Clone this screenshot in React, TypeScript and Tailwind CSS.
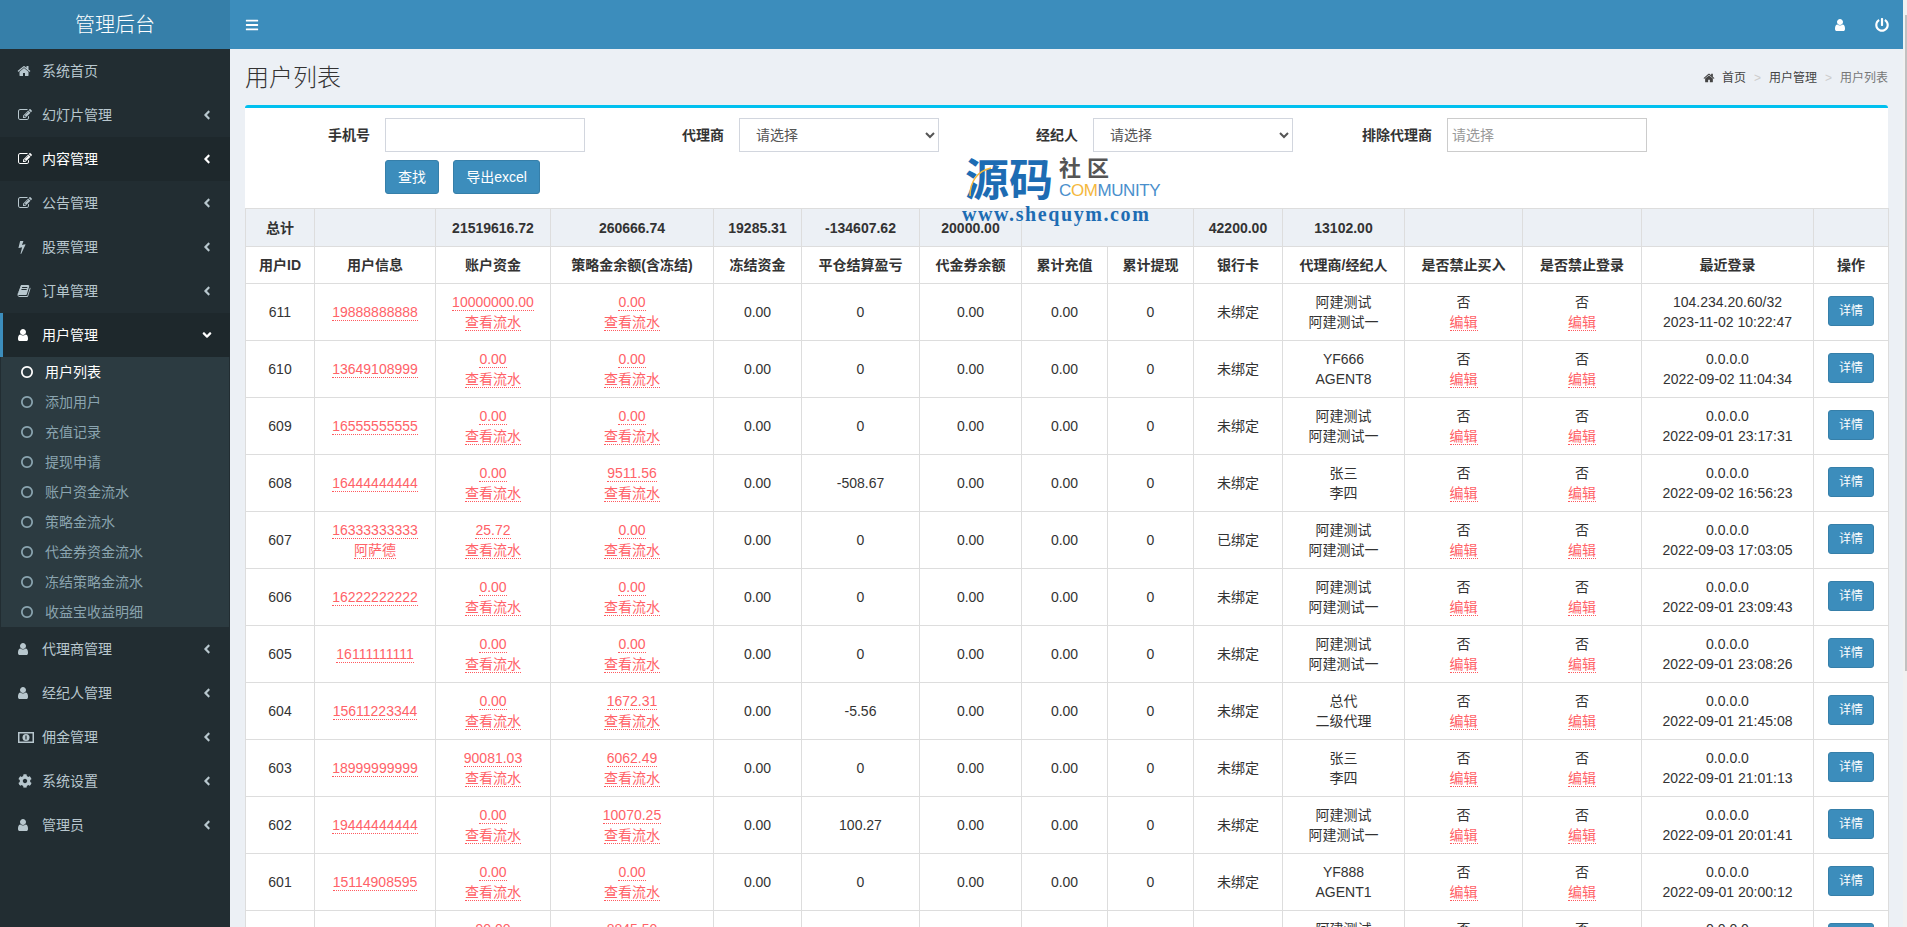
import type { ReactNode } from 'react';
import { FaAngleDown, FaAngleLeft, FaBars, FaCog, FaPowerOff } from 'react-icons/fa';

// font-awesome 4 glyphs, the fa package only ships the newer shapes
const glyphs = {
    home: 'M1472 992v480q0 26-19 45t-45 19h-384v-384h-256v384h-384q-26 0-45-19t-19-45v-480q0-1 .5-3t.5-3l575-474 575 474q1 2 1 6zm223-69l-62 74q-8 9-21 11h-3q-13 0-21-7l-692-577-692 577q-12 8-24 7-13-2-21-11l-62-74q-8-10-7-23.500t11-21.500l719-599q32-26 76-26t76 26l244 204v-195q0-14 9-23t23-9h192q14 0 23 9t9 23v408l219 182q10 8 11 21.500t-7 23.500z',
    edit: 'M888 1184l116-116-152-152-116 116v56h96v96h56zm440-720q-16-16-33 1l-350 350q-17 17-1 33t33-1l350-350q17-17 1-33zm80 594v190q0 119-84.500 203.500t-203.500 84.500h-832q-119 0-203.500-84.500t-84.500-203.500v-832q0-119 84.500-203.500t203.500-84.500h832q63 0 117 25 15 7 18 23 3 17-9 29l-49 49q-14 14-32 8-23-6-45-6h-832q-66 0-113 47t-47 113v832q0 66 47 113t113 47h832q66 0 113-47t47-113v-126q0-13 9-22l64-64q15-15 35-7t20 29zm-96-738l288 288-672 672h-288v-288zm444 132l-92 92-288-288 92-92q28-28 68-28t68 28l152 152q28 28 28 68t-28 68z',
    book: 'M1703 478q40 57 18 129l-275 906q-19 64-76.500 107.500t-122.500 43.500h-923q-77 0-148.500-53.500t-99.500-131.500q-24-67-2-127 0-4 3-27t4-37q1-8-3-21.500t-3-19.500q2-11 8-21t16.500-23.500 16.500-23.500q23-38 45-91.500t30-91.500q3-10 .5-30t-.5-28q3-11 17-28t17-23q21-36 42-92t25-90q1-9-2.500-32t.5-28q4-13 22-30.500t22-22.500q19-26 42.500-84.500t27.500-96.500q1-8-3-25.500t-2-26.500q2-8 9-18t18-23 17-21q8-12 16.500-30.500t15-35 16-36 19.500-32 26.500-23.500 36-11.500 47.500 5.500l-1 3q38-9 51-9h761q74 0 114 56t18 130l-274 906q-36 119-71.500 153.500t-128.500 34.500h-869q-27 0-38 15-11 16-1 43 24 70 144 70h923q29 0 56-15.500t35-41.500l300-987q7-22 5-57 38 15 59 43zm-1064 2q-4 13 2 22.500t20 9.500h608q13 0 25.500-9.500t16.500-22.500l21-64q4-13-2-22.500t-20-9.500h-608q-13 0-25.500 9.500t-16.500 22.500zm-83 256q-4 13 2 22.500t20 9.500h608q13 0 25.500-9.500t16.500-22.500l21-64q4-13-2-22.500t-20-9.500h-608q-13 0-25.500 9.500t-16.500 22.500z',
    user: 'M1536 1399q0 109-62.500 187t-150.500 78h-854q-88 0-150.500-78t-62.500-187q0-85 8.500-160.500t31.500-151.500 58.500-130 94-88.500 134.500-34.500q131 128 313 128t313-128q76 0 134.500 34.500t94 88.500 58.500 130 31.500 151.500 8.500 160.500zm-256-887q0 159-112.500 271.500t-271.500 112.500-271.500-112.500-112.500-271.500 112.500-271.500 271.500-112.500 271.500 112.500 112.500 271.500z',
    bolt: 'M1333 566q18 20 7 44l-540 1157q-13 25-42 25-4 0-14-2-17-5-25.500-19t-4.500-30l197-808-406 101q-4 1-12 1-18 0-31-11-18-15-13-39l201-825q4-14 16-23t28-9h328q19 0 32 12.500t13 29.500q0 8-5 18l-171 463 396-98q8-2 12-2 19 0 34 15z',
    circle: 'M896 352q-148 0-273 73t-198 198-73 273 73 273 198 198 273 73 273-73 198-198 73-273-73-273-198-198-273-73zm768 544q0 209-103 385.500t-279.500 279.500-385.500 103-385.500-103-279.500-279.500-103-385.500 103-385.500 279.500-279.500 385.500-103 385.500 103 279.500 279.500 103 385.500z',
};

const Fa4 = ({ name, className = '' }: { name: keyof typeof glyphs; className?: string }) => (
    <svg viewBox="0 0 1792 1792" fill="currentColor" className={`h-[14px] w-[14px] ${className}`}>
        <path d={glyphs[name]} />
    </svg>
);

const MoneyIcon = () => (
    <svg viewBox="0 0 16 11" className="h-[11px] w-[16px]">
        <rect width="16" height="11" fill="currentColor" />
        <rect x="1.5" y="1.5" width="13" height="8" fill="#222d32" />
        <circle cx="8" cy="5.5" r="3.5" fill="currentColor" />
        <rect x="7.4" y="3.5" width="1.2" height="4" fill="#222d32" />
    </svg>
);

const menu = [
    { label: '系统首页', icon: <Fa4 name="home" className="-ml-px" />, arrow: false },
    { label: '幻灯片管理', icon: <Fa4 name="edit" />, arrow: true },
    { label: '内容管理', icon: <Fa4 name="edit" />, arrow: true, hover: true },
    { label: '公告管理', icon: <Fa4 name="edit" />, arrow: true },
    { label: '股票管理', icon: <Fa4 name="bolt" className="-ml-[3px]" />, arrow: true },
    { label: '订单管理', icon: <Fa4 name="book" className="-ml-px" />, arrow: true },
    { label: '用户管理', icon: <Fa4 name="user" className="-ml-[2px]" />, arrow: true, open: true },
    { label: '代理商管理', icon: <Fa4 name="user" className="-ml-[2px]" />, arrow: true },
    { label: '经纪人管理', icon: <Fa4 name="user" className="-ml-[2px]" />, arrow: true },
    { label: '佣金管理', icon: <MoneyIcon />, arrow: true },
    { label: '系统设置', icon: <FaCog />, arrow: true },
    { label: '管理员', icon: <Fa4 name="user" className="-ml-[2px]" />, arrow: true },
];

const subMenu = ['用户列表', '添加用户', '充值记录', '提现申请', '账户资金流水', '策略金流水', '代金券资金流水', '冻结策略金流水', '收益宝收益明细'];

const colWidths = [69, 121, 115, 163, 88, 118, 102, 86, 86, 89, 122, 118, 119, 172, 75];

const headers = ['用户ID', '用户信息', '账户资金', '策略金余额(含冻结)', '冻结资金', '平仓结算盈亏', '代金券余额', '累计充值', '累计提现', '银行卡', '代理商/经纪人', '是否禁止买入', '是否禁止登录', '最近登录', '操作'];

const ajian = ['阿建测试', '阿建测试一'];

interface Row {
    id: number;
    phone: string;
    name?: string;
    money: string;
    strategy: string;
    profit: string;
    bank: string;
    agent: string[];
    ip: string;
    time: string;
}

const rows: Row[] = [
    { id: 611, phone: '19888888888', money: '10000000.00', strategy: '0.00', profit: '0', bank: '未绑定', agent: ajian, ip: '104.234.20.60/32', time: '2023-11-02 10:22:47' },
    { id: 610, phone: '13649108999', money: '0.00', strategy: '0.00', profit: '0', bank: '未绑定', agent: ['YF666', 'AGENT8'], ip: '0.0.0.0', time: '2022-09-02 11:04:34' },
    { id: 609, phone: '16555555555', money: '0.00', strategy: '0.00', profit: '0', bank: '未绑定', agent: ajian, ip: '0.0.0.0', time: '2022-09-01 23:17:31' },
    { id: 608, phone: '16444444444', money: '0.00', strategy: '9511.56', profit: '-508.67', bank: '未绑定', agent: ['张三', '李四'], ip: '0.0.0.0', time: '2022-09-02 16:56:23' },
    { id: 607, phone: '16333333333', name: '阿萨德', money: '25.72', strategy: '0.00', profit: '0', bank: '已绑定', agent: ajian, ip: '0.0.0.0', time: '2022-09-03 17:03:05' },
    { id: 606, phone: '16222222222', money: '0.00', strategy: '0.00', profit: '0', bank: '未绑定', agent: ajian, ip: '0.0.0.0', time: '2022-09-01 23:09:43' },
    { id: 605, phone: '16111111111', money: '0.00', strategy: '0.00', profit: '0', bank: '未绑定', agent: ajian, ip: '0.0.0.0', time: '2022-09-01 23:08:26' },
    { id: 604, phone: '15611223344', money: '0.00', strategy: '1672.31', profit: '-5.56', bank: '未绑定', agent: ['总代', '二级代理'], ip: '0.0.0.0', time: '2022-09-01 21:45:08' },
    { id: 603, phone: '18999999999', money: '90081.03', strategy: '6062.49', profit: '0', bank: '未绑定', agent: ['张三', '李四'], ip: '0.0.0.0', time: '2022-09-01 21:01:13' },
    { id: 602, phone: '19444444444', money: '0.00', strategy: '10070.25', profit: '100.27', bank: '未绑定', agent: ajian, ip: '0.0.0.0', time: '2022-09-01 20:01:41' },
    { id: 601, phone: '15114908595', money: '0.00', strategy: '0.00', profit: '0', bank: '未绑定', agent: ['YF888', 'AGENT1'], ip: '0.0.0.0', time: '2022-09-01 20:00:12' },
    { id: 600, phone: '15000000000', money: '90.00', strategy: '8845.50', profit: '0', bank: '未绑定', agent: ajian, ip: '0.0.0.0', time: '2022-09-01 19:30:00' },
];

const Editable = ({ children }: { children: ReactNode }) => (
    <span className="border-b border-dotted border-[#ff5a5f] text-[#ff6268]">{children}</span>
);

const Stack = ({ top, bottom }: { top: ReactNode; bottom: ReactNode }) => (
    <>
        <div>{top}</div>
        <div>{bottom}</div>
    </>
);

const Cell = ({ children }: { children?: ReactNode }) => (
    <td className="border border-[#ddd] p-0 text-center align-middle">{children}</td>
);

const Total = ({ children, span }: { children?: ReactNode; span?: number }) => (
    <th colSpan={span} className="border border-[#ddd] p-0 text-center align-middle font-bold">{children}</th>
);

const Sidebar = () => (
    <aside className="flex w-[230px] shrink-0 flex-col bg-[#222d32]">
        <div className="flex h-[49px] shrink-0 items-center justify-center bg-[#367fa9] text-[20px] font-light text-white">管理后台</div>
        <ul className="text-[14px] text-[#b8c7ce]">
            {menu.map((item) => (
                <li key={item.label}>
                    <div
                        className={`flex h-[44px] items-center border-l-[3px] pl-[15px] pr-[16px] ${
                            item.open
                                ? 'border-[#3c8dbc] bg-[#1e282c] text-white'
                                : item.hover
                                  ? 'border-transparent bg-[#1e282c] text-white'
                                  : 'border-transparent'
                        }`}
                    >
                        <span className="w-[24px] shrink-0 text-[14px]">{item.icon}</span>
                        <span className="flex-1">{item.label}</span>
                        {item.arrow && (item.open ? <FaAngleDown className="text-[14px]" /> : <FaAngleLeft className="text-[14px]" />)}
                    </div>
                    {item.open && (
                        <ul className="mx-px bg-[#2c3b41] text-[#8aa4af]">
                            {subMenu.map((sub, i) => (
                                <li key={sub} className={`flex h-[30px] items-center pl-[19px] ${i === 0 ? 'text-white' : ''}`}>
                                    <span className="w-[25px] shrink-0">
                                        <Fa4 name="circle" />
                                    </span>
                                    {sub}
                                </li>
                            ))}
                        </ul>
                    )}
                </li>
            ))}
        </ul>
    </aside>
);

const Watermark = () => (
    <div className="pointer-events-none absolute left-[720px] top-[48px] z-10 w-[210px]">
        <div className="flex">
            <div className="relative text-[44px] font-bold leading-[50px] text-[#1d6cb3]">
                源码
                <svg className="absolute left-[4px] top-[10px]" width="24" height="32" viewBox="0 0 24 32" fill="none">
                    <path d="M1 30C1 16 8 5 22 2" stroke="#f5b83d" strokeWidth="1.5" />
                </svg>
            </div>
            <div className="ml-[6px]">
                <div className="text-[22px] font-bold leading-[26px] tracking-[6px] text-[#555]">社区</div>
                <div className="text-[17px] leading-[18px] tracking-[-0.4px] text-[#4a8fcc]">
                    C<span className="text-[#f5b83d]">OM</span>MUNITY
                </div>
            </div>
        </div>
        <div className="-mt-[2px] -ml-[3px] font-['Liberation_Serif',serif] text-[20px] font-bold leading-[20px] tracking-[1.6px] text-[#1d6cb3]">www.shequym.com</div>
    </div>
);

const SearchForm = () => (
    <div className="h-[100px] pt-[10px]">
        <div className="grid grid-cols-[340px_354px_354px_354px]">
            <div className="flex items-center">
                <label className="flex-1 pr-[15px] text-right font-bold">手机号</label>
                <input className="h-[34px] w-[200px] border border-[#d2d6de] px-3" />
            </div>
            <div className="flex items-center">
                <label className="flex-1 pr-[15px] text-right font-bold">代理商</label>
                <select className="h-[34px] w-[200px] border border-[#d2d6de] bg-white px-3 text-[#555]">
                    <option>请选择</option>
                </select>
            </div>
            <div className="flex items-center">
                <label className="flex-1 pr-[15px] text-right font-bold">经纪人</label>
                <select className="h-[34px] w-[200px] border border-[#d2d6de] bg-white px-3 text-[#555]">
                    <option>请选择</option>
                </select>
            </div>
            <div className="flex items-center">
                <label className="flex-1 pr-[15px] text-right font-bold">排除代理商</label>
                <input className="h-[34px] w-[200px] border border-[#ccc] px-1 placeholder:text-[#999]" placeholder="请选择" />
            </div>
        </div>
        <div className="ml-[140px] mt-[8px] flex gap-[14px]">
            <button className="h-[34px] w-[54px] rounded-[3px] border border-[#367fa9] bg-[#3c8dbc] text-white">查找</button>
            <button className="h-[34px] w-[87px] rounded-[3px] border border-[#367fa9] bg-[#3c8dbc] text-white">导出excel</button>
        </div>
    </div>
);

const UserTable = () => (
    <table className="w-full table-fixed border-collapse">
        <colgroup>
            {colWidths.map((w, i) => (
                <col key={i} style={{ width: w }} />
            ))}
        </colgroup>
        <thead>
            <tr className="h-[38px] bg-[#ecf0f5]">
                <Total>总计</Total>
                <Total />
                <Total>21519616.72</Total>
                <Total>260666.74</Total>
                <Total>19285.31</Total>
                <Total>-134607.62</Total>
                <Total>20000.00</Total>
                <Total span={2} />
                <Total>42200.00</Total>
                <Total>13102.00</Total>
                <Total />
                <Total />
                <Total />
                <Total />
            </tr>
            <tr className="h-[37px]">
                {headers.map((h) => (
                    <Total key={h}>{h}</Total>
                ))}
            </tr>
        </thead>
        <tbody>
            {rows.map((row) => (
                <tr key={row.id} className="h-[57px]">
                    <Cell>{row.id}</Cell>
                    <Cell>
                        <Editable>{row.phone}</Editable>
                        {row.name && (
                            <div>
                                <Editable>{row.name}</Editable>
                            </div>
                        )}
                    </Cell>
                    <Cell>
                        <Stack top={<Editable>{row.money}</Editable>} bottom={<Editable>查看流水</Editable>} />
                    </Cell>
                    <Cell>
                        <Stack top={<Editable>{row.strategy}</Editable>} bottom={<Editable>查看流水</Editable>} />
                    </Cell>
                    <Cell>0.00</Cell>
                    <Cell>{row.profit}</Cell>
                    <Cell>0.00</Cell>
                    <Cell>0.00</Cell>
                    <Cell>0</Cell>
                    <Cell>{row.bank}</Cell>
                    <Cell>
                        <Stack top={row.agent[0]} bottom={row.agent[1]} />
                    </Cell>
                    <Cell>
                        <Stack top="否" bottom={<Editable>编辑</Editable>} />
                    </Cell>
                    <Cell>
                        <Stack top="否" bottom={<Editable>编辑</Editable>} />
                    </Cell>
                    <Cell>
                        <Stack top={row.ip} bottom={row.time} />
                    </Cell>
                    <Cell>
                        <button className="mx-auto mb-[3px] block h-[30px] w-[46px] rounded-[3px] border border-[#367fa9] bg-[#3c8dbc] text-[12px] text-white">详情</button>
                    </Cell>
                </tr>
            ))}
        </tbody>
    </table>
);

export default function App() {
    return (
        <div className="flex h-[927px] overflow-hidden bg-[#ecf0f5] font-['Liberation_Sans','Noto_Sans_CJK_SC',sans-serif] text-[14px] leading-[20px] text-[#333]">
            <Sidebar />
            <main className="min-w-0 flex-1">
                <header className="flex h-[49px] items-center justify-between bg-[#3c8dbc] pl-[15px] pr-[14px] text-white">
                    <FaBars className="text-[14px]" />
                    <div className="flex items-center gap-[28px]">
                        <Fa4 name="user" />
                        <FaPowerOff className="text-[14px]" />
                    </div>
                </header>
                <div className="px-[15px]">
                    <div className="flex h-[56px] items-center justify-between pt-[2px]">
                        <h1 className="text-[24px] font-light leading-[28px]">用户列表</h1>
                        <div className="flex items-center text-[12px] text-[#444]">
                            <Fa4 name="home" className="mr-[7px] !h-[12px] !w-[12px]" />
                            首页
                            <span className="px-[8px] text-[#ccc]">&gt;</span>
                            用户管理
                            <span className="px-[8px] text-[#ccc]">&gt;</span>
                            <span className="text-[#777]">用户列表</span>
                        </div>
                    </div>
                    <section className="relative rounded-[3px] border-t-[3px] border-[#00c0ef] bg-white">
                        <Watermark />
                        <SearchForm />
                        <UserTable />
                    </section>
                </div>
            </main>
            <div className="w-[4px] shrink-0 bg-[#f1f1f1] pl-[2px] pt-[15px]">
                <div className="h-[656px] bg-[#c1c1c1]" />
            </div>
        </div>
    );
}
